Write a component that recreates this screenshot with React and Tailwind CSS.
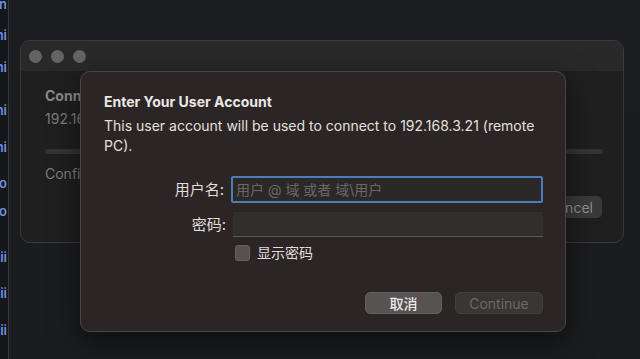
import React from "react";

const font = { fontFamily: '"Inter", "Noto Sans CJK SC", sans-serif' };

const gutterRows = [
    { top: -4, t: "n" },
    { top: 27, t: "ni" },
    { top: 59, t: "ni" },
    { top: 102, t: "ni" },
    { top: 139, t: "ni" },
    { top: 175, t: "o" },
    { top: 203, t: "o" },
    { top: 249, t: "ii" },
    { top: 285, t: "ii" },
    { top: 322, t: "ii" },
];

const Gutter = () => (
    <div className="absolute left-0 top-0 h-full w-[9px] overflow-hidden border-r border-[#363940] bg-[#15171b]">
        {gutterRows.map((r, i) => (
            <div
                key={i}
                className="absolute right-[1px] text-[13px] font-semibold leading-[16px] text-[#6f8fe0]"
                style={{ top: r.top }}
            >
                {r.t}
            </div>
        ))}
    </div>
);

// window behind the sheet
const BackWindow = () => (
    <div className="absolute left-[20px] top-[40px] flex h-[203px] w-[604px] flex-col overflow-hidden rounded-[10px] border border-[#3b3b3c] bg-[#1f1f20]">
        <div className="flex h-[30px] items-center gap-[9px] bg-[#29292a] pl-[8px]">
            <span className="h-[13px] w-[13px] rounded-full bg-[#646464]" />
            <span className="h-[13px] w-[13px] rounded-full bg-[#646464]" />
            <span className="h-[13px] w-[13px] rounded-full bg-[#646464]" />
        </div>
        <div className="flex flex-col px-[24px] pt-[17px]">
            <div className="text-[14px] font-bold leading-[16px] text-[#8a8a8a]">Conn</div>
            <div className="mt-[7px] text-[14px] leading-[16px] text-[#7c7c7c]">192.168</div>
            <div className="mt-[22px] h-[5px] w-[558px] rounded-full bg-[#343435]" />
            <div className="mt-[12px] text-[14px] leading-[16px] text-[#7c7c7c]">Configuring</div>
            <div className="mt-[14px] mr-[-3px] flex justify-end">
                <div className="flex h-[22px] w-[64px] items-center justify-center rounded-[5px] bg-[#3a3a3b] text-[14px] text-[#8e8e8e]">
                    Cancel
                </div>
            </div>
        </div>
    </div>
);

const Field = ({ label, children }) => (
    <div className="flex items-center">
        <div className="w-[123px] text-right text-[15px] leading-[16px] text-[#e2dedd]">{label}</div>
        <div className="ml-[7px]">{children}</div>
    </div>
);

const Sheet = () => (
    <div className="absolute left-[80px] top-[71px] flex h-[261px] w-[486px] flex-col rounded-[10px] border border-[#4a4544] bg-[#2b2625] pl-[23px] pr-[22px] pt-[21px] shadow-[0_10px_30px_rgba(0,0,0,0.5)]">
        <div className="text-[14px] font-bold leading-[17px] text-[#ece8e7]">Enter Your User Account</div>
        <p className="mt-[6px] w-[445px] text-[14px] leading-[20px] text-[#e4e0df]">
            This user account will be used to connect to 192.168.3.21 (remote PC).
        </p>

        <div className="mt-[20px] flex flex-col pl-[3px]">
            <Field label="用户名:">
                <div className="flex h-[27px] w-[312px] items-center rounded-[2px] border-[2.5px] border-[#4d7db8] bg-[#2b2828] pl-[3px] text-[14px] text-[#6c6767]">
                    用户 @ 域 或者 域\用户
                </div>
            </Field>
            <div className="mt-[9px]">
                <Field label="密码:">
                    <div className="h-[25px] w-[310px] border-b border-[#5b5756] bg-[#322e2d]" />
                </Field>
            </div>
            <div className="mt-[8px] flex items-center pl-[128px]">
                <span className="h-[16px] w-[15px] rounded-[3px] border border-[#67625f] bg-[#57524f]" />
                <span className="ml-[7px] text-[14px] leading-[16px] text-[#e2dedd]">显示密码</span>
            </div>
        </div>

        <div className="mt-auto mb-[17px] flex justify-end gap-[13px]">
            <div className="flex h-[22px] w-[77px] items-center justify-center rounded-[5px] border border-[#625e5c] bg-[#575352] text-[14px] font-medium text-[#ece8e7]">
                取消
            </div>
            <div className="flex h-[22px] w-[88px] items-center justify-center rounded-[5px] border border-[#433f3e] bg-[#3a3635] text-[14px] text-[#6d6968]">
                Continue
            </div>
        </div>
    </div>
);

export default function App() {
    return (
        <div
            className="relative h-[359px] w-[640px] overflow-hidden bg-[linear-gradient(180deg,#1c1d21_0%,#1b1c1f_60%,#1a1c1e_100%)]"
            style={font}
        >
            <Gutter />
            <BackWindow />
            <Sheet />
        </div>
    );
}
